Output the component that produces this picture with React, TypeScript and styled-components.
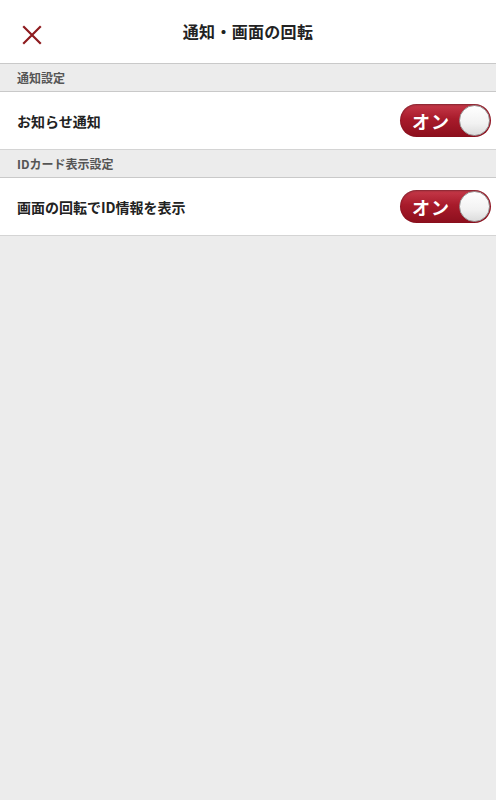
import React from "react";
import styled, { createGlobalStyle } from "styled-components";

const GlobalStyle = createGlobalStyle`
  html, body {
    margin: 0;
    padding: 0;
    background: #ececec;
    font-family: "Noto Sans CJK JP", "Noto Sans", sans-serif;
  }
`;

type Setting = { label: string; on: boolean };
type Section = { title: string; items: Setting[] };

const sections: Section[] = [
  { title: "通知設定", items: [{ label: "お知らせ通知", on: true }] },
  { title: "IDカード表示設定", items: [{ label: "画面の回転でID情報を表示", on: true }] },
];

export default function App() {
  return (
    <Page>
      <GlobalStyle />
      <Header>
        <CloseButton aria-label="閉じる">
          <svg width="20" height="20" viewBox="0 0 20 20">
            <path d="M2 2 L18 18 M18 2 L2 18" stroke="#8e1b1f" strokeWidth="2.2" strokeLinecap="square" />
          </svg>
        </CloseButton>
        <Title>通知・画面の回転</Title>
      </Header>
      {sections.map((s) => (
        <React.Fragment key={s.title}>
          <SectionTitle>{s.title}</SectionTitle>
          {s.items.map((item) => (
            <Row key={item.label}>
              <Label>{item.label}</Label>
              <Toggle $on={item.on}>
                <ToggleText>{item.on ? "オン" : "オフ"}</ToggleText>
                <Knob />
              </Toggle>
            </Row>
          ))}
        </React.Fragment>
      ))}
    </Page>
  );
}

const Page = styled.div`
  width: 496px;
  min-height: 800px;
  background: #ececec;
`;

const Header = styled.div`
  position: relative;
  height: 63px;
  background: #fff;
  border-bottom: 1px solid #c9c9c9;
  display: flex;
  align-items: center;
  justify-content: center;
`;

const CloseButton = styled.button`
  position: absolute;
  left: 22px;
  top: 25px;
  width: 20px;
  height: 20px;
  padding: 0;
  border: none;
  background: none;
  display: flex;
`;

const Title = styled.div`
  font-size: 16px;
  font-weight: 700;
  color: #222;
  letter-spacing: 0.3px;
  margin-top: -2px;
`;

const SectionTitle = styled.div`
  height: 27px;
  background: #ececec;
  border-bottom: 1px solid #c9c9c9;
  padding-left: 17px;
  display: flex;
  align-items: center;
  font-size: 12px;
  font-weight: 700;
  color: #555;
`;

const Row = styled.div`
  height: 57px;
  background: #fff;
  border-bottom: 1px solid #d4d4d4;
  display: flex;
  align-items: center;
  justify-content: space-between;
  padding: 0 5px 0 17px;
`;

const Label = styled.div`
  font-size: 14px;
  font-weight: 700;
  color: #222;
`;

const Toggle = styled.div<{ $on: boolean }>`
  width: 91px;
  height: 33px;
  box-sizing: border-box;
  border-radius: 17px;
  background: ${(p) =>
    p.$on
      ? "linear-gradient(to bottom, #c73a4a 0%, #a81b2b 45%, #8c0f1d 100%)"
      : "linear-gradient(to bottom, #ddd, #bbb)"};
  box-shadow: inset 0 1px 2px rgba(0, 0, 0, 0.35);
  display: flex;
  align-items: center;
  justify-content: space-between;
  padding: 0 1px 0 12px;
`;

const ToggleText = styled.span`
  color: #fff;
  font-size: 18px;
  font-weight: 700;
  letter-spacing: 1px;
`;

const Knob = styled.div`
  width: 31px;
  height: 31px;
  border-radius: 50%;
  background: linear-gradient(to bottom, #ffffff 0%, #f2f2f2 60%, #dcdcdc 100%);
  border: 1px solid #9a9a9a;
  box-sizing: border-box;
`;
